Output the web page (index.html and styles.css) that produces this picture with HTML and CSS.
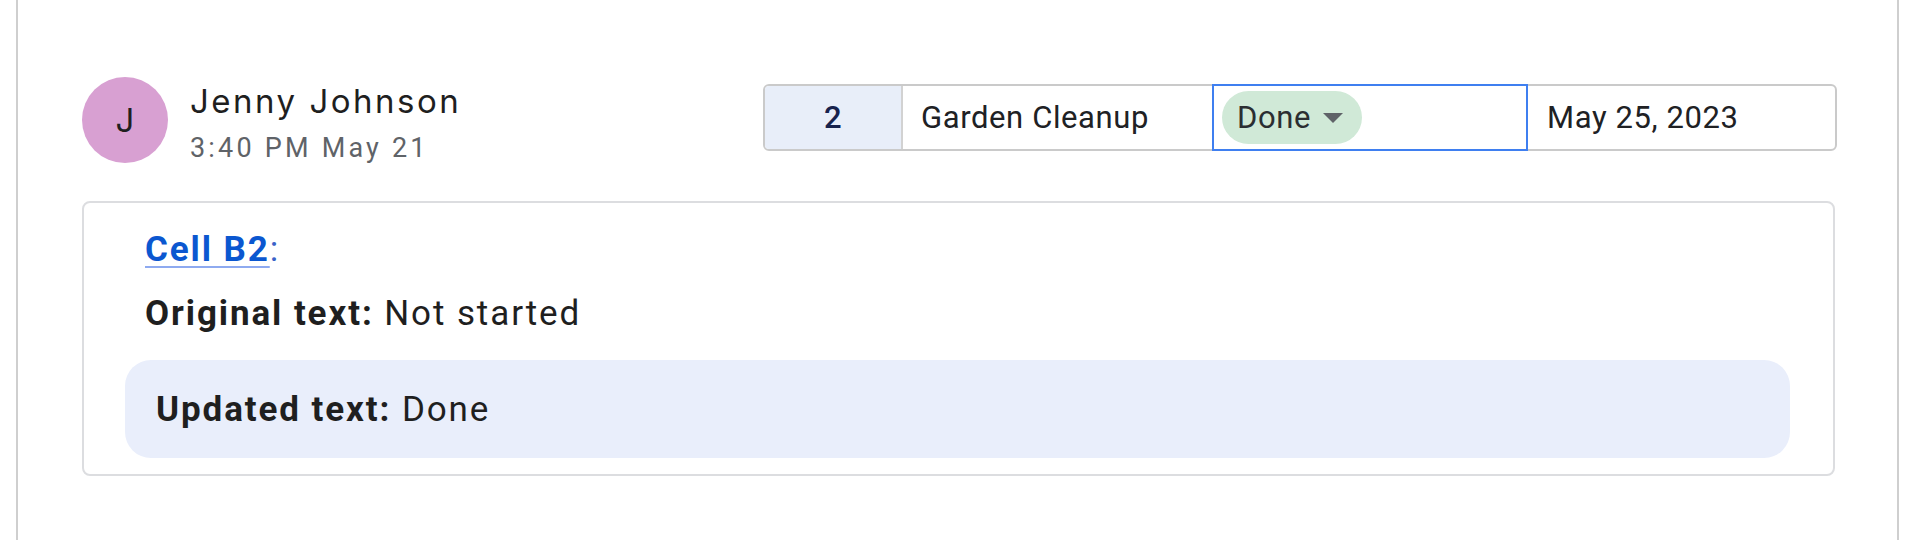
FILE: index.html
```html
<!DOCTYPE html>
<html lang="en">
<head>
<meta charset="utf-8">
<title>Cell change notification</title>
<link rel="stylesheet" href="styles.css">
</head>
<body>
  <div class="frame">
    <div class="header">
      <div class="author">
        <div class="avatar">J</div>
        <div class="who">
          <div class="name">Jenny Johnson</div>
          <div class="time">3:40 PM May 21</div>
        </div>
      </div>
      <div class="sheet">
        <div class="cell cell-row">2</div>
        <div class="cell cell-task">Garden Cleanup</div>
        <div class="cell cell-status">
          <span class="pill">Done<svg class="caret" width="20" height="10" viewBox="0 0 20 10"><polygon points="0,0 20,0 10,10" fill="#5f6368"/></svg></span>
        </div>
        <div class="cell cell-date">May 25, 2023</div>
      </div>
    </div>
    <div class="card">
      <div class="line line-cell"><a class="cell-link" href="#">Cell B2</a><span class="colon">:</span></div>
      <div class="line line-orig"><b>Original text:</b> Not started</div>
      <div class="updated"><b>Updated text:</b> Done</div>
    </div>
  </div>
</body>
</html>
```
FILE: styles.css
```css
html, body {
  margin: 0;
  padding: 0;
  background: #ffffff;
}

body {
  font-family: Roboto, "Liberation Sans", sans-serif;
  color: #202124;
}

.frame {
  box-sizing: border-box;
  height: 540px;
  margin: 0 21px 0 16px;
  border-left: 2px solid #cfcfcf;
  border-right: 2px solid #cfcfcf;
  padding: 77px 62px 0 64px;
}

.header {
  display: flex;
  justify-content: space-between;
  align-items: flex-start;
}

.author {
  display: flex;
  align-items: flex-start;
  gap: 22px;
}

.avatar {
  width: 86px;
  height: 86px;
  border-radius: 50%;
  background: #d8a0d2;
  display: flex;
  align-items: center;
  justify-content: center;
  font-family: Inter, Roboto, sans-serif;
  font-size: 33px;
  color: #1f1f1f;
}

.who {
  padding-top: 4px;
}

.name {
  font-family: Inter, Roboto, sans-serif;
  font-size: 33px;
  line-height: 40px;
  letter-spacing: 2.5px;
  color: #1f1f1f;
}

.time {
  margin-top: 11px;
  font-size: 27px;
  line-height: 32px;
  letter-spacing: 3.2px;
  color: #5f6368;
}

.sheet {
  display: flex;
  flex: none;
  box-sizing: border-box;
  width: 1074px;
  height: 67px;
  margin-top: 7px;
  margin-right: -2px;
  border: 2px solid #cacaca;
  border-radius: 6px;
  font-size: 31px;
  letter-spacing: 0.6px;
  color: #202124;
}

.cell {
  display: flex;
  flex: none;
  align-items: center;
  box-sizing: border-box;
}

.cell-row {
  width: 138px;
  justify-content: center;
  background: #e8eef9;
  border-right: 2px solid #d2d2d2;
  border-radius: 4px 0 0 4px;
  color: #17224d;
  font-weight: 500;
}

.cell-task {
  width: 309px;
  padding-left: 18px;
}

.cell-status {
  width: 316px;
  margin: -2px 0;
  border: 2px solid #3f7ff0;
  padding-left: 8px;
}

.cell-date {
  width: 307px;
  padding-left: 19px;
}

.pill {
  display: inline-flex;
  align-items: center;
  gap: 12px;
  height: 53px;
  padding: 0 19px 0 15px;
  border-radius: 27px;
  background: #d0e9d7;
  color: #2b2e31;
}

.caret {
  display: block;
}

.card {
  margin-top: 37px;
  border: 2px solid #dcdde0;
  border-radius: 8px;
  padding: 26px 43px 16px 41px;
  font-size: 35px;
  line-height: 41px;
  letter-spacing: 1.9px;
  color: #1f1f1f;
}

.line {
  padding-left: 20px;
}

.line-orig {
  margin-top: 23px;
}

.cell-link {
  color: #0b57d0;
  font-weight: 700;
  text-decoration: underline;
  text-decoration-color: #8eaaf0;
  text-decoration-thickness: 2px;
  text-underline-offset: 5px;
}

.colon {
  color: #3a62c8;
}

b {
  font-weight: 700;
}

.updated {
  margin-top: 26px;
  background: #e9eefb;
  border-radius: 26px;
  padding: 29px 31px 28px 31px;
}
```
